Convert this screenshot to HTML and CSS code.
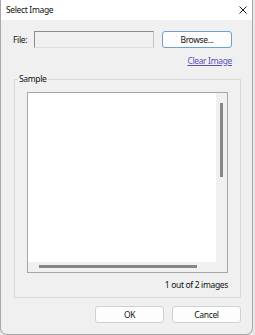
FILE: index.html
```html
<!DOCTYPE html>
<html lang="en">
<head>
  <meta charset="UTF-8" />
  <title>Select Image</title>
  <link rel="stylesheet" href="styles.css">
</head>
<body>
  <div class="window">
    <!-- Title bar -->
    <div class="titlebar">
      <span class="title">Select Image</span>
      <svg class="close" width="8" height="8" viewBox="0 0 8 8">
        <path d="M0.5 0.5 L7.5 7.5 M7.5 0.5 L0.5 7.5" stroke="#1a1a1a" stroke-width="1" fill="none"/>
      </svg>
    </div>

    <div class="content">
      <div class="file-row">
        <span class="file-label">File:</span>
        <div class="file-box"></div>
        <button class="btn btn-focus">Browse...</button>
      </div>
      <div class="link-row">
        <a class="clear-link" href="#">Clear Image</a>
      </div>

      <div class="group">
        <span class="group-title">Sample</span>
        <div class="listbox">
          <div class="list-area"></div>
          <div class="vscroll"><div class="vthumb"></div></div>
          <div class="hscroll"><div class="hthumb"></div></div>
          <div class="corner"></div>
        </div>
        <div class="count">1 out of 2 images</div>
      </div>

      <div class="actions">
        <button class="btn btn-action">OK</button>
        <button class="btn btn-action">Cancel</button>
      </div>
    </div>
  </div>
</body>
</html>
```

FILE: styles.css
```css
* {
  box-sizing: border-box;
}

body {
  margin: 0;
  font-family: 'Noto Sans', 'Open Sans', sans-serif;
  font-size: 8.5px;
  letter-spacing: -0.35px;
  line-height: 12px;
  color: #111;
  background-color: #e9e9e9;
}

.window {
  width: 253px;
  height: 335px;
  background-color: #f0f0f0;
  border: 1px solid #a8a8a8;
  border-top: none;
  border-radius: 0 0 7px 7px;
  display: flex;
  flex-direction: column;
  overflow: hidden;
}

/* Title bar */
.titlebar {
  height: 20px;
  background-color: white;
  display: flex;
  align-items: center;
  justify-content: space-between;
  padding: 0 5px 0 5px;
}

.close {
  display: block;
}

.content {
  padding-top: 11px;
}

/* File row */
.file-row {
  display: flex;
  align-items: center;
  height: 17px;
}

.file-label {
  width: 33px;
  padding-left: 12px;
}

.file-box {
  width: 120px;
  height: 17px;
  border: 1px solid;
  border-color: #8c8c8c #c4c4c4 #dcdcdc #8c8c8c;
  background-color: #f0f0f0;
}

.btn {
  font-family: inherit;
  font-size: 8.5px;
  letter-spacing: -0.35px;
  color: #111;
  background-color: #fdfdfd;
  border: 1px solid #d0d0d0;
  border-radius: 3px;
  padding: 0;
  cursor: pointer;
}

.btn-focus {
  margin-left: 8px;
  width: 70px;
  height: 17px;
  border-color: #6fa1cf;
}

.link-row {
  display: flex;
  justify-content: flex-end;
  width: 231px;
  height: 12px;
  margin-top: 7px;
}

.clear-link {
  color: #5a4fc0;
  text-decoration: underline;
}

/* Group box */
.group {
  position: relative;
  margin: 12px 0 0 13px;
  width: 227px;
  height: 219px;
  border: 1px solid #d9d9d9;
  padding: 12px 12px 0 12px;
}

.group-title {
  position: absolute;
  top: -7px;
  left: 3px;
  padding: 0 1px;
  background-color: #f0f0f0;
}

.listbox {
  height: 181px;
  border: 1px solid #a6a6a6;
  display: grid;
  grid-template-columns: 1fr 11px;
  grid-template-rows: 1fr 10px;
  background-color: #f0f0f0;
}

.list-area {
  background-color: white;
}

.vscroll {
  padding: 10px 0 0 4px;
}

.vthumb {
  width: 3px;
  height: 74px;
  background-color: #858585;
}

.hscroll {
  padding: 3px 0 0 11px;
}

.hthumb {
  width: 158px;
  height: 3px;
  background-color: #858585;
}

.count {
  text-align: right;
  margin-top: 6px;
}

/* Bottom buttons */
.actions {
  display: flex;
  justify-content: flex-end;
  gap: 8px;
  width: 240px;
  margin-top: 8px;
}

.btn-action {
  width: 69px;
  height: 17px;
}
```
